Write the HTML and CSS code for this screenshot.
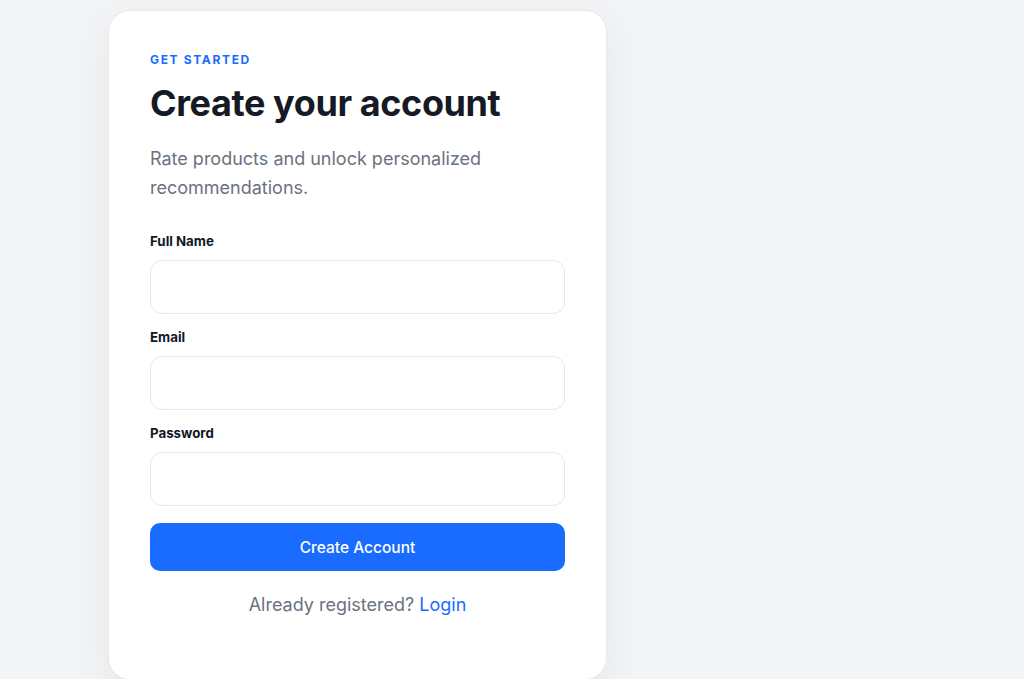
FILE: index.html
```html
<!DOCTYPE html>
<html lang="en">
<head>
<meta charset="utf-8">
<title>Create your account</title>
<link rel="stylesheet" href="styles.css">
</head>
<body>
<main class="page">
  <section class="card">
    <div class="eyebrow">GET STARTED</div>
    <h1 class="title">Create your account</h1>
    <p class="subtitle">Rate products and unlock personalized recommendations.</p>
    <form class="form">
      <label class="field">
        <span class="label">Full Name</span>
        <input class="input" type="text">
      </label>
      <label class="field">
        <span class="label">Email</span>
        <input class="input" type="email">
      </label>
      <label class="field">
        <span class="label">Password</span>
        <input class="input" type="password">
      </label>
      <button class="button" type="button">Create Account</button>
    </form>
    <p class="footer">Already registered? <a class="link" href="#">Login</a></p>
  </section>
</main>
</body>
</html>
```
FILE: styles.css
```css
* { box-sizing: border-box; }
html, body { margin: 0; padding: 0; }
body {
  background: #f3f4f6;
  font-family: "Inter", "Noto Sans", sans-serif;
  color: #111827;
  height: 679px;
  overflow: hidden;
}
.page {
  display: flex;
  padding: 10px 0 0 108px;
}
.card {
  width: 499px;
  background: #ffffff;
  border: 1px solid #e6e9ee;
  border-radius: 22px;
  box-shadow: 0 12px 40px rgba(15, 23, 42, 0.06);
  padding: 41px 41px 60px;
  display: flex;
  flex-direction: column;
}
.eyebrow {
  font-size: 12px;
  line-height: 16px;
  font-weight: 700;
  letter-spacing: 1.65px;
  color: #1a6bff;
}
.title {
  margin: 13px 0 0;
  font-size: 36px;
  line-height: 44px;
  font-weight: 700;
  letter-spacing: -0.4px;
  color: #151a25;
}
.subtitle {
  margin: 19px 0 0;
  font-size: 18px;
  line-height: 29px;
  color: #6b7280;
  max-width: 360px;
}
.form {
  margin-top: 30px;
  display: flex;
  flex-direction: column;
}
.field {
  display: flex;
  flex-direction: column;
  margin-bottom: 14px;
}
.field:last-of-type { margin-bottom: 13px; }
.label {
  font-size: 13.3px;
  line-height: 18px;
  font-weight: 700;
  color: #111827;
  margin-bottom: 10px;
}
.input {
  height: 54px;
  border: 1px solid #e5e8ee;
  border-radius: 12px;
  background: #fff;
  font: inherit;
  padding: 0 16px;
  outline: none;
}
.button {
  margin-top: 4px;
  height: 48px;
  border: none;
  border-radius: 10px;
  background: #1a6bff;
  color: #fff;
  font-family: inherit;
  font-size: 15.5px;
  font-weight: 500;
}
.footer {
  margin: 20px 0 0;
  text-align: center;
  font-size: 18px;
  line-height: 28px;
  color: #6b7280;
}
.link {
  color: #1a6bff;
  text-decoration: none;
}
```
